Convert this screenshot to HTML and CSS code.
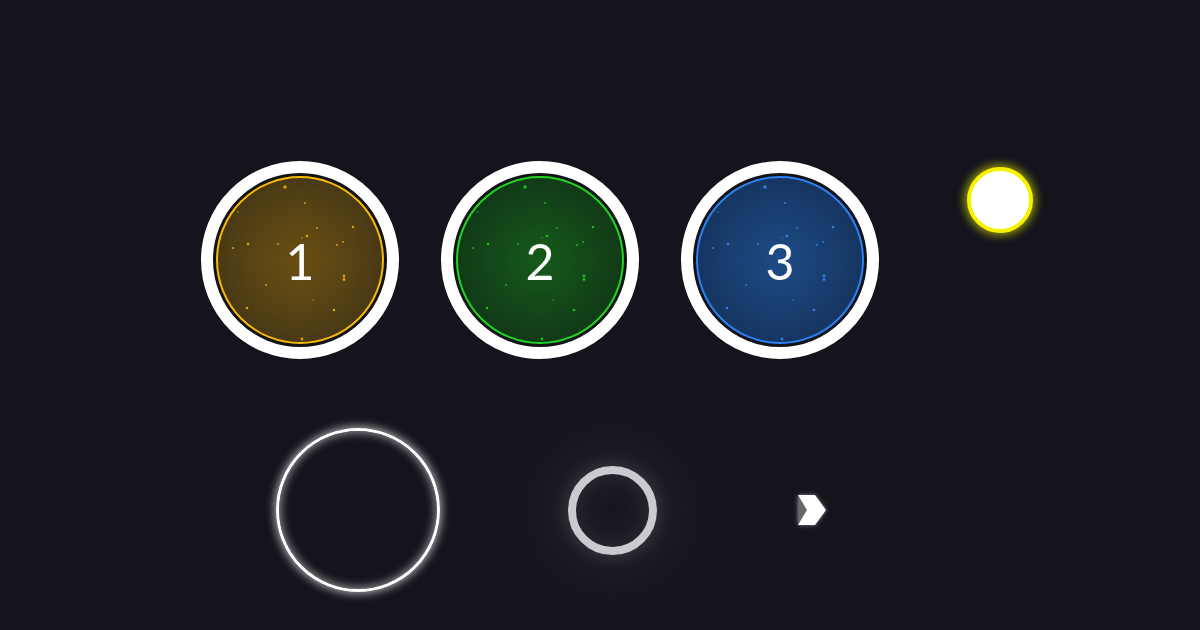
FILE: index.html
```html
<!DOCTYPE html>
<html>
<head>
<meta charset="utf-8">
<link rel="stylesheet" href="styles.css">
</head>
<body>
<div class="page">
  <div class="top-row">
    <div class="orb orb-gold">
      <div class="orb-inner">
        <svg class="specks" viewBox="-84 -84 168 168" width="168" height="168"><g fill="currentColor"><circle cx="-15" cy="-73" r="1.7"/><circle cx="5" cy="-57" r="0.9"/><circle cx="53" cy="-33" r="1.3"/><circle cx="17" cy="-32" r="0.9"/><circle cx="7" cy="-24" r="1.3"/><circle cx="2" cy="-22" r="0.7"/><circle cx="-52" cy="-16" r="1.3"/><circle cx="-67" cy="-12" r="1"/><circle cx="-22" cy="-16" r="0.9"/><circle cx="37" cy="-15" r="1"/><circle cx="43" cy="-18" r="0.9"/><circle cx="44" cy="16" r="1.4"/><circle cx="44" cy="19.5" r="1.4"/><circle cx="-34" cy="25" r="0.9"/><circle cx="-53" cy="48" r="1.3"/><circle cx="13" cy="40" r="0.7"/><circle cx="34" cy="50" r="1.3"/><circle cx="2" cy="79" r="1.4"/><circle cx="-62" cy="-48" r="0.7"/></g></svg>
        <span class="num">1</span>
      </div>
    </div>
    <div class="orb orb-green">
      <div class="orb-inner">
        <svg class="specks" viewBox="-84 -84 168 168" width="168" height="168"><g fill="currentColor"><circle cx="-15" cy="-73" r="1.7"/><circle cx="5" cy="-57" r="0.9"/><circle cx="53" cy="-33" r="1.3"/><circle cx="17" cy="-32" r="0.9"/><circle cx="7" cy="-24" r="1.3"/><circle cx="2" cy="-22" r="0.7"/><circle cx="-52" cy="-16" r="1.3"/><circle cx="-67" cy="-12" r="1"/><circle cx="-22" cy="-16" r="0.9"/><circle cx="37" cy="-15" r="1"/><circle cx="43" cy="-18" r="0.9"/><circle cx="44" cy="16" r="1.4"/><circle cx="44" cy="19.5" r="1.4"/><circle cx="-34" cy="25" r="0.9"/><circle cx="-53" cy="48" r="1.3"/><circle cx="13" cy="40" r="0.7"/><circle cx="34" cy="50" r="1.3"/><circle cx="2" cy="79" r="1.4"/><circle cx="-62" cy="-48" r="0.7"/></g></svg>
        <span class="num">2</span>
      </div>
    </div>
    <div class="orb orb-blue">
      <div class="orb-inner">
        <svg class="specks" viewBox="-84 -84 168 168" width="168" height="168"><g fill="currentColor"><circle cx="-15" cy="-73" r="1.7"/><circle cx="5" cy="-57" r="0.9"/><circle cx="53" cy="-33" r="1.3"/><circle cx="17" cy="-32" r="0.9"/><circle cx="7" cy="-24" r="1.3"/><circle cx="2" cy="-22" r="0.7"/><circle cx="-52" cy="-16" r="1.3"/><circle cx="-67" cy="-12" r="1"/><circle cx="-22" cy="-16" r="0.9"/><circle cx="37" cy="-15" r="1"/><circle cx="43" cy="-18" r="0.9"/><circle cx="44" cy="16" r="1.4"/><circle cx="44" cy="19.5" r="1.4"/><circle cx="-34" cy="25" r="0.9"/><circle cx="-53" cy="48" r="1.3"/><circle cx="13" cy="40" r="0.7"/><circle cx="34" cy="50" r="1.3"/><circle cx="2" cy="79" r="1.4"/><circle cx="-62" cy="-48" r="0.7"/></g></svg>
        <span class="num">3</span>
      </div>
    </div>
    <div class="sun"></div>
  </div>
  <div class="bottom-row">
    <div class="halo-ring"></div>
    <div class="soft-ring"></div>
    <svg class="chevron" width="36" height="36" viewBox="0 0 36 36">
      <polygon points="3,4 12,18 3,32" fill="#66666c"/>
      <polygon points="3,3 20,3 31,18 20,33 3,33 12,18" fill="#ffffff"/>
    </svg>
  </div>
</div>
</body>
</html>
```
FILE: styles.css
```css
html, body {
  margin: 0;
  padding: 0;
  background: #13141c;
}
.page {
  width: 1200px;
  height: 630px;
  overflow: hidden;
  font-family: Lato, "Open Sans", sans-serif;
}
.top-row {
  display: flex;
  align-items: flex-start;
  padding-top: 161px;
  padding-left: 201px;
}
.orb {
  width: 198px;
  height: 198px;
  box-sizing: border-box;
  border: 12px solid #ffffff;
  border-radius: 50%;
  background: #121318;
  padding: 3px;
  margin-right: 42px;
  display: flex;
}
.orb-inner {
  position: relative;
  flex: 1;
  border-radius: 50%;
  border: 2px solid;
  display: flex;
  align-items: center;
  justify-content: center;
  overflow: hidden;
}
.orb-gold .orb-inner {
  border-color: #f7b900;
  background: radial-gradient(circle at 50% 50%, #6a4f12 0%, #564214 45%, #3a2f16 100%);
  color: #d9a012;
}
.orb-green .orb-inner {
  border-color: #1fd61f;
  background: radial-gradient(circle at 50% 50%, #165a19 0%, #134418 50%, #0f2e16 100%);
  color: #25b825;
}
.orb-blue .orb-inner {
  border-color: #2b82f7;
  background: radial-gradient(circle at 50% 50%, #1e4c86 0%, #183c6c 50%, #142b50 100%);
  color: #3280e0;
}
.specks {
  position: absolute;
  left: 50%;
  top: 50%;
  margin-left: -84px;
  margin-top: -84px;
}
.num {
  position: relative;
  color: #ffffff;
  font-size: 50px;
  font-weight: 400;
  line-height: 1;
  margin-top: 2px;
}
.sun {
  width: 66px;
  height: 66px;
  box-sizing: border-box;
  border: 4px solid #f4f200;
  border-radius: 50%;
  background: #ffffff;
  margin-left: 46px;
  margin-top: 6px;
  box-shadow: 0 0 9px 3px rgba(240, 240, 0, 0.55);
}
.bottom-row {
  display: flex;
  align-items: center;
  height: 164px;
  margin-top: 69px;
}
.halo-ring {
  width: 164px;
  height: 164px;
  box-sizing: border-box;
  border: 3px solid #ffffff;
  border-radius: 50%;
  margin-left: 276px;
  box-shadow: 0 0 9px 2px rgba(255, 255, 255, 0.6), inset 0 0 9px 2px rgba(255, 255, 255, 0.5);
}
.soft-ring {
  width: 89px;
  height: 89px;
  box-sizing: border-box;
  border: 8px solid #cbcbcf;
  border-radius: 50%;
  margin-left: 128px;
  background: radial-gradient(circle, #14151c 0%, #1a1b23 45%, #2d2e36 100%);
  box-shadow: 0 0 70px 18px rgba(255, 255, 255, 0.07), 0 0 16px 3px rgba(255, 255, 255, 0.12);
}
.chevron {
  margin-left: 138px;
  filter: drop-shadow(0 0 2px rgba(255, 255, 255, 0.5));
}
```
